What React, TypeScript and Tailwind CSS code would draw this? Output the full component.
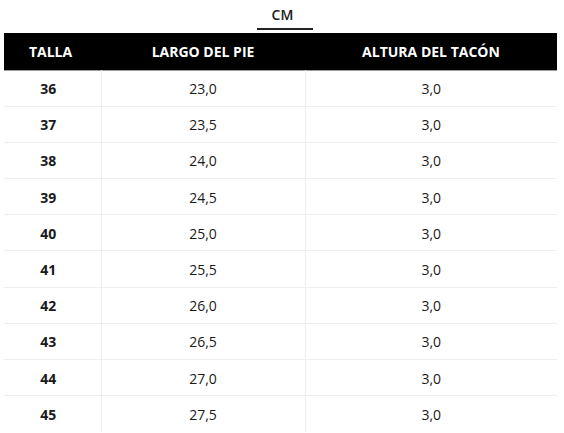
const rows: [string, string, string][] = [
  ["36", "23,0", "3,0"],
  ["37", "23,5", "3,0"],
  ["38", "24,0", "3,0"],
  ["39", "24,5", "3,0"],
  ["40", "25,0", "3,0"],
  ["41", "25,5", "3,0"],
  ["42", "26,0", "3,0"],
  ["43", "26,5", "3,0"],
  ["44", "27,0", "3,0"],
  ["45", "27,5", "3,0"],
];

export default function App() {
  return (
    <div className="min-h-screen bg-white text-[#1a1a1a] font-['Open_Sans',sans-serif]">
      <div className="ml-[4px] w-[553px]">
        {/* unidad */}
        <div className="flex flex-col items-center pt-[5px] h-[33px]">
          <span className="text-[14px] leading-[20px] font-semibold ml-[4px]">CM</span>
          <div className="mt-[3px] h-[1.5px] w-[56px] bg-[#222] ml-[8px]" />
        </div>

        <table className="w-full border-collapse table-fixed">
          <colgroup>
            <col className="w-[97px]" />
            <col className="w-[204px]" />
            <col />
          </colgroup>
          <thead>
            <tr className="bg-black text-white h-[37px] border-b border-[#999]">
              <th className="text-[14px] font-bold pr-[4px]">TALLA</th>
              <th className="text-[14px] font-bold">LARGO DEL PIE</th>
              <th className="text-[14px] font-bold">ALTURA DEL TACÓN</th>
            </tr>
          </thead>
          <tbody>
            {rows.map(([talla, largo, tacon], i) => (
              <tr
                key={talla}
                className={`h-[36.2px] text-[14px] ${i < rows.length - 1 ? "border-b border-[#eeeeee]" : ""}`}
              >
                <td className="text-center font-bold pr-[8px] pt-[1px]">{talla}</td>
                <td className="text-center border-l border-[#eeeeee] pt-[1px]">{largo}</td>
                <td className="text-center border-l border-[#eeeeee] pt-[1px]">{tacon}</td>
              </tr>
            ))}
          </tbody>
        </table>
      </div>
    </div>
  );
}
